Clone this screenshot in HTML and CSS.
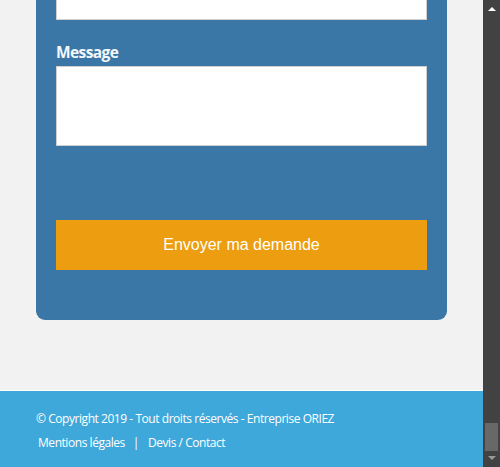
FILE: index.html
```html
<!DOCTYPE html>
<html lang="fr">
<head>
<meta charset="utf-8">
<title>Devis / Contact</title>
<link rel="stylesheet" href="styles.css">
</head>
<body>
<div class="viewport">
  <div class="page">
    <main class="main">
      <form class="card">
        <div class="input-stub"></div>
        <label class="label" for="msg">Message</label>
        <textarea id="msg" class="textarea"></textarea>
        <button type="button" class="submit">Envoyer ma demande</button>
      </form>
    </main>
    <footer class="footer">
      <p class="copy">© Copyright 2019 - Tout droits réservés - Entreprise ORIEZ</p>
      <p class="links"><a href="#">Mentions légales</a><span class="sep">|</span><a href="#">Devis / Contact</a></p>
    </footer>
  </div>
  <div class="scrollbar">
    <span class="arrow-up"></span>
    <span class="track"><span class="thumb"></span></span>
    <span class="arrow-down"></span>
  </div>
</div>
</body>
</html>
```

FILE: styles.css
```css
html, body {
  margin: 0;
  padding: 0;
  height: 467px;
  overflow: hidden;
}
body {
  background: #f2f2f2;
  font-family: "Open Sans", "Liberation Sans", sans-serif;
}
.viewport {
  display: flex;
  height: 467px;
}
.page {
  width: 483px;
  display: flex;
  flex-direction: column;
}
.main {
  height: 390px;
  padding-left: 36px;
  box-sizing: border-box;
}
.card {
  width: 411px;
  box-sizing: border-box;
  background: #3a77a6;
  border-radius: 0 0 9px 9px;
  padding: 0 20px 50px;
  display: flex;
  flex-direction: column;
  margin: 0;
}
.input-stub {
  height: 20px;
  box-sizing: border-box;
  background: #fff;
  border: 1px solid #cfcfcf;
  border-top: none;
}
.label {
  margin-top: 21px;
  font-size: 15.5px;
  line-height: 22px;
  font-weight: 700;
  letter-spacing: -0.6px;
  color: #f3f7fb;
}
.textarea {
  display: block;
  margin: 3px 0 0;
  height: 80px;
  box-sizing: border-box;
  border: 1px solid #cfcfcf;
  background: #fff;
  resize: none;
  padding: 0;
}
.submit {
  margin-top: 74px;
  height: 50px;
  border: none;
  background: #ed9d10;
  color: #fff;
  font-family: "Liberation Sans", Arial, sans-serif;
  font-size: 16px;
  padding: 0;
}
.footer {
  flex: 1;
  background: #3ea8da;
  border-top: 1px solid #ffffff;
  padding: 19px 0 0 36px;
  color: #fff;
  font-size: 12px;
  letter-spacing: -0.45px;
}
.copy {
  margin: 0;
  line-height: 18px;
}
.links {
  margin: 6px 0 0 2px;
  line-height: 18px;
}
.links a {
  color: #fff;
  text-decoration: none;
}
.sep {
  display: inline-block;
  margin: 0 9px 0 8px;
}
.scrollbar {
  width: 17px;
  background: #424242;
  display: flex;
  flex-direction: column;
  align-items: center;
}
.arrow-up {
  margin-top: 7px;
  width: 0;
  height: 0;
  border-left: 4px solid transparent;
  border-right: 4px solid transparent;
  border-bottom: 4px solid #ffffff;
}
.track {
  flex: 1;
  width: 100%;
  display: flex;
  flex-direction: column;
  justify-content: flex-end;
  align-items: center;
}
.thumb {
  width: 13px;
  height: 28px;
  background: #686868;
  margin-bottom: 5px;
}
.arrow-down {
  margin-bottom: 7px;
  width: 0;
  height: 0;
  border-left: 4px solid transparent;
  border-right: 4px solid transparent;
  border-top: 4px solid #9a9a9a;
}
```
